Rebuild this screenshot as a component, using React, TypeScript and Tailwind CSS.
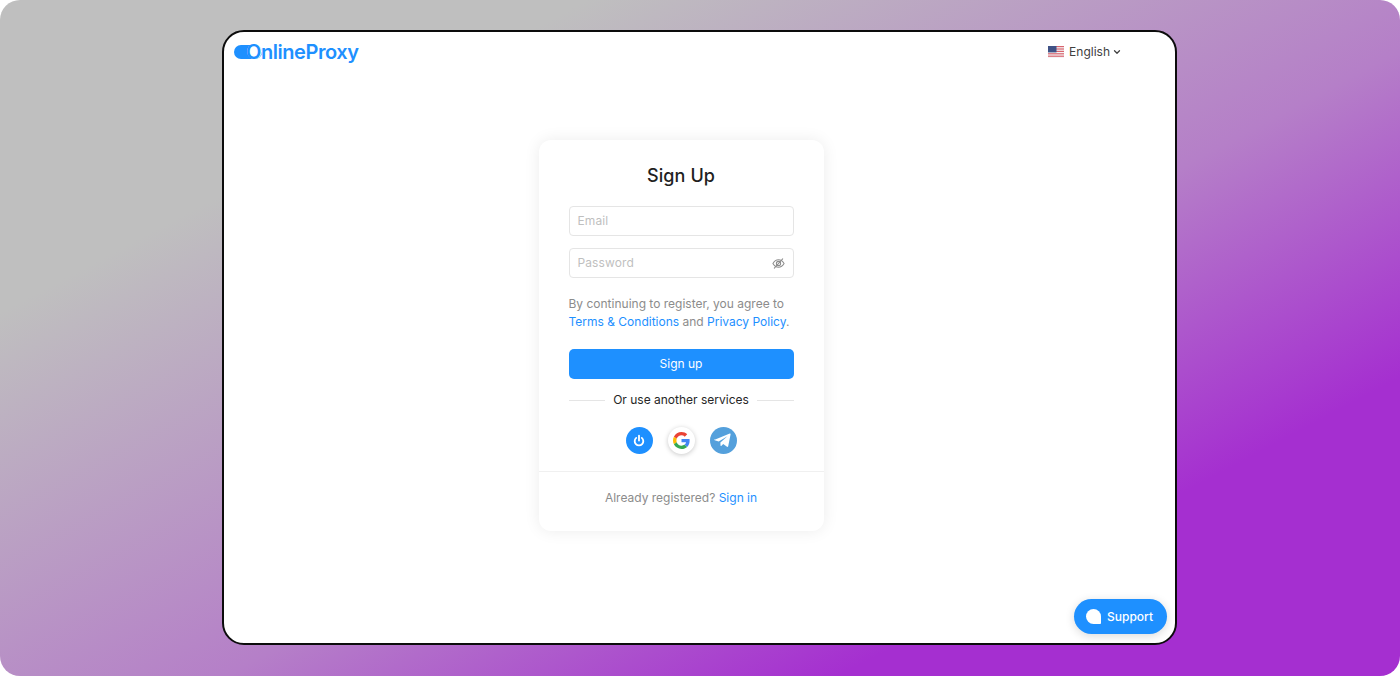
import React from 'react'
import { ChevronDown } from 'lucide-react'

const FlagUS = () => (
  <svg width="16" height="12" viewBox="0 0 16 12" className="shrink-0">
    <rect width="16" height="12" fill="#f3f4f6" />
    <rect y="0" width="16" height="1.2" fill="#d9646e" />
    <rect y="2.4" width="16" height="1.2" fill="#d9646e" />
    <rect y="4.8" width="16" height="1.2" fill="#d9646e" />
    <rect y="7.2" width="16" height="1.2" fill="#d9646e" />
    <rect y="9.6" width="16" height="1.2" fill="#d9646e" />
    <rect width="8.5" height="6.4" fill="#3f5286" />
  </svg>
)

const GoogleIcon = () => (
  <svg width="17" height="17" viewBox="0 0 48 48">
    <path fill="#EA4335" d="M24 9.5c3.5 0 6.700 1.200 9.200 3.600l6.900-6.900C35.900 2.400 30.500 0 24 0 14.600 0 6.500 5.400 2.600 13.200l8 6.200C12.500 13.700 17.800 9.500 24 9.500z" />
    <path fill="#4285F4" d="M46.900 24.500c0-1.600-.1-3.100-.4-4.500H24v9h12.900c-.6 3-2.200 5.500-4.700 7.200l7.700 6c4.500-4.200 7-10.300 7-17.700z" />
    <path fill="#FBBC05" d="M10.500 28.600c-.5-1.400-.8-3-.8-4.600s.3-3.200.8-4.600l-8-6.200C.9 16.500 0 20.100 0 24s.9 7.500 2.600 10.800l7.900-6.200z" />
    <path fill="#34A853" d="M24 48c6.500 0 11.900-2.100 15.900-5.800l-7.700-6c-2.200 1.400-4.900 2.300-8.200 2.300-6.200 0-11.500-4.200-13.400-9.900l-8 6.200C6.500 42.600 14.600 48 24 48z" />
  </svg>
)

const SlashedEye = () => (
  <svg width="13" height="13" viewBox="0 0 14 14" fill="none" stroke="#8c8c8c" strokeWidth="1.1" strokeLinecap="round">
    <path d="M1 7c1.500-2.600 3.500-4 6-4s4.500 1.400 6 4c-1.500 2.600-3.500 4-6 4S2.500 9.600 1 7z" />
    <circle cx="7" cy="7" r="2.300" />
    <path d="M2.500 12 11.500 2" />
  </svg>
)

const inputClass =
  'flex h-[30px] items-center justify-between rounded-[4px] border border-[#e5e5e5] bg-white pl-2 pr-2 text-[12px] tracking-[0.1px] text-[#bfbfbf]'

export default function App() {
  return (
    <div className="relative h-[676px] w-[1400px] overflow-hidden bg-white font-['Inter',sans-serif]">
      <div className="flex h-full justify-center rounded-[20px] bg-[linear-gradient(152deg,#bfbfbf_22%,#b57fc8_56%,#a52fd0_79%)] pb-[31px] pl-[222px] pr-[223px] pt-[30px]">
        <div className="relative flex h-full w-full flex-col rounded-[22px] border-2 border-[#0c0c0c] bg-white">
          <header className="flex h-[40px] items-center justify-between pl-[10px] pr-[53px]">
            <div className="flex items-center">
              <span className="mr-[-16px] mt-[-1px] h-[14px] w-[28px] rounded-full bg-[#1e90ff]" />
              <span className="relative text-[20px] font-semibold leading-none tracking-[-0.45px] text-[#1e90ff]">
                <span className="absolute left-[1px] top-[2px] h-[15px] w-[15px] rounded-full bg-white" />
                <span className="relative">OnlineProxy</span>
              </span>
            </div>
            <div className="flex items-center text-[12px] text-[#404040]">
              <FlagUS />
              <span className="ml-[5px]">English</span>
              <ChevronDown size={10} strokeWidth={3} className="ml-[2px] text-[#404040]" />
            </div>
          </header>

          <main className="flex flex-1 justify-center pr-[37px] pt-[68px]">
            <div className="h-[391px] w-[285px] rounded-[12px] bg-white shadow-[0_0_16px_rgba(0,0,0,0.08)]">
              <div className="px-[30px] pt-[24px]">
                <h1 className="text-center text-[18px] font-medium leading-[24px] tracking-[0.1px] text-[#1f1f1f]">Sign Up</h1>
                <div className="mt-[18px] flex flex-col gap-[12px]">
                  <div className={inputClass}>Email</div>
                  <div className={inputClass}>
                    <span>Password</span>
                    <SlashedEye />
                  </div>
                </div>
                <p className="mt-[17px] whitespace-nowrap text-[12px] leading-[18px] text-[#8c8c8c]">
                  By continuing to register, you agree to
                  <br />
                  <a className="text-[#1e90ff]">Terms &amp; Conditions</a> and{' '}
                  <a className="text-[#1e90ff]">Privacy Policy</a>.
                </p>
                <button className="mt-[18px] block h-[30px] w-full rounded-[5px] bg-[#1e90ff] text-center text-[12px] text-white">
                  Sign up
                </button>
                <div className="mt-[12px] flex items-center gap-[8px] text-[12px] leading-[18px] text-[#262626]">
                  <span className="h-px flex-1 bg-[#e5e5e5]" />
                  <span>Or use another services</span>
                  <span className="h-px flex-1 bg-[#e5e5e5]" />
                </div>
                <div className="mt-[18px] flex justify-center gap-[15px]">
                  <span className="flex h-[27px] w-[27px] items-center justify-center rounded-full bg-[#1e90ff]">
                    <svg width="14" height="14" viewBox="0 0 13 13" fill="none" stroke="white" strokeWidth="1.7" strokeLinecap="round">
                      <path d="M6.500 1.500v4.500" />
                      <path d="M3.900 3.600a4 4 0 1 0 5.200 0" />
                    </svg>
                  </span>
                  <span className="flex h-[27px] w-[27px] items-center justify-center rounded-full bg-white shadow-[0_1px_5px_rgba(0,0,0,0.22)]">
                    <GoogleIcon />
                  </span>
                  <span className="flex h-[27px] w-[27px] items-center justify-center rounded-full bg-[#54a0dc]">
                    <svg width="17" height="15" viewBox="0 0 17 15" className="ml-[-2px]">
                      <path fill="white" d="M0.600 6.800 15.800 0.600c.5-.2.900.1.800.7l-2.400 12c-.1.600-.7.800-1.200.5l-3.800-2.800-2 1.900c-.3.300-.7.100-.7-.3l-.1-3.200 7-6.200-8.700 5.400-4-1.300c-.6-.2-.6-1-.1-1.300z" />
                    </svg>
                  </span>
                </div>
              </div>
              <div className="mt-[17px] border-t border-[#f0f0f0] pt-[17px] text-center text-[12px] leading-[18px] text-[#8c8c8c]">
                Already registered? <a className="text-[#1e90ff]">Sign in</a>
              </div>
            </div>
          </main>

          <button className="absolute bottom-[9px] right-[8px] flex h-[35px] w-[93px] items-center gap-[6px] rounded-full bg-[#1e90ff] pl-[12px] text-[12px] font-medium text-white shadow-[0_2px_10px_rgba(0,0,0,0.15)]">
            <span className="h-[15px] w-[15px] rounded-[8px_8px_1px_8px] bg-white" />
            Support
          </button>
        </div>
      </div>
    </div>
  )
}
